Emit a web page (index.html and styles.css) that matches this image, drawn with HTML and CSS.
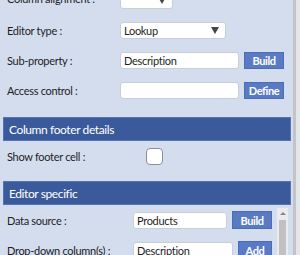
FILE: index.html
```html
<!DOCTYPE html>
<html>
<head>
<meta charset="utf-8">
<link rel="stylesheet" href="styles.css">
</head>
<body>
<div class="frame">
  <div class="panel">
    <div class="content">
      <div class="row row-first">
        <span class="label">Column alignment :</span>
        <div class="select select-sm"><span></span><span class="arrow"></span></div>
      </div>
      <div class="row">
        <span class="label">Editor type :</span>
        <div class="select select-md"><span>Lookup</span><span class="arrow"></span></div>
      </div>
      <div class="row">
        <span class="label">Sub-property :</span>
        <div class="input input-wide">Description</div>
        <button class="btn btn-build">Build</button>
      </div>
      <div class="row">
        <span class="label">Access control :</span>
        <div class="input input-wide"></div>
        <button class="btn btn-build">Define</button>
      </div>

      <div class="header header-first">Column footer details</div>
      <div class="row">
        <span class="label">Show footer cell :</span>
        <div class="checkbox"></div>
      </div>

      <div class="header header-second">Editor specific</div>
      <div class="list">
        <div class="list-body">
          <div class="row">
            <span class="label label-wide">Data source :</span>
            <div class="input input-ds">Products</div>
            <button class="btn btn-sm">Build</button>
          </div>
          <div class="row">
            <span class="label label-wide">Drop-down column(s) :</span>
            <div class="input input-dd">Description</div>
            <button class="btn btn-add">Add</button>
          </div>
        </div>
        <div class="vscroll">
          <div class="vs-up"></div>
          <div class="vs-thumb"></div>
        </div>
      </div>
    </div>
  </div>
  <div class="outer-scroll"></div>
</div>
</body>
</html>
```

FILE: styles.css
```css
html, body {
  margin: 0;
  padding: 0;
  width: 300px;
  height: 255px;
  overflow: hidden;
  background: #d4ddee;
  font-family: Lato, "Noto Sans", sans-serif;
  font-size: 11px;
  letter-spacing: -0.3px;
  color: #1e1e1e;
}

.frame {
  display: flex;
  height: 255px;
}

.panel {
  width: 293px;
  overflow: hidden;
}

.content {
  margin-top: -15px;
}

.row {
  display: flex;
  align-items: center;
  height: 30px;
  padding-left: 7px;
}

.row-first .label {
  position: relative;
  top: -2px;
}

.label {
  width: 113px;
  flex: none;
  white-space: nowrap;
}

.label-wide {
  width: 126px;
}

.select, .input {
  box-sizing: border-box;
  height: 17px;
  background: #fff;
  border: 1px solid #c9cdd4;
  border-radius: 3px;
  display: flex;
  align-items: center;
  padding-left: 3px;
  white-space: nowrap;
  overflow: hidden;
}

.select {
  justify-content: space-between;
  padding-right: 6px;
}

.select-sm { width: 53px; }
.select-md { width: 106px; }

.arrow {
  width: 0;
  height: 0;
  border-left: 4.5px solid transparent;
  border-right: 4.5px solid transparent;
  border-top: 7px solid #444;
}

.input-wide { width: 119px; }
.input-ds { width: 94px; }
.input-dd { width: 100px; }

.btn {
  box-sizing: border-box;
  height: 17px;
  margin-left: 5px;
  padding: 0;
  background: #5a7bc4;
  border: 1px solid #4b6cb6;
  color: #fff;
  font-family: Lato, "Noto Sans", sans-serif;
  font-size: 11px;
  font-weight: bold;
  letter-spacing: -0.4px;
  line-height: 15px;
}

.btn-build { width: 40px; }
.btn-sm { width: 40px; height: 18px; }
.btn-add { width: 34px; height: 18px; }

.header {
  box-sizing: border-box;
  height: 24px;
  margin-left: 3px;
  width: 288px;
  background: #3a5a9c;
  border: 1px solid #5474b4;
  color: #fff;
  font-size: 12px;
  letter-spacing: -0.4px;
  padding-left: 5px;
  display: flex;
  align-items: center;
}

.header-first { margin-top: 12px; }
.header-second { margin-top: 10px; }

.checkbox {
  box-sizing: border-box;
  width: 17px;
  height: 17px;
  margin-left: 26px;
  background: #fff;
  border: 1px solid #8a8e96;
  border-radius: 4px;
}

.list {
  display: flex;
}

.list-body {
  width: 277px;
}

.vscroll {
  margin-top: 3px;
  width: 11px;
  background: #e9ebef;
  display: flex;
  flex-direction: column;
  align-items: center;
}

.vs-up {
  margin-top: 4px;
  width: 0;
  height: 0;
  border-left: 3px solid transparent;
  border-right: 3px solid transparent;
  border-bottom: 3px solid #888;
}

.vs-thumb {
  margin-top: 5px;
  width: 7px;
  height: 60px;
  background: #c1c1c1;
}

.outer-scroll {
  width: 3px;
  background: #c2c4c8;
  border-right: 4px solid #e4e6ea;
}
```
